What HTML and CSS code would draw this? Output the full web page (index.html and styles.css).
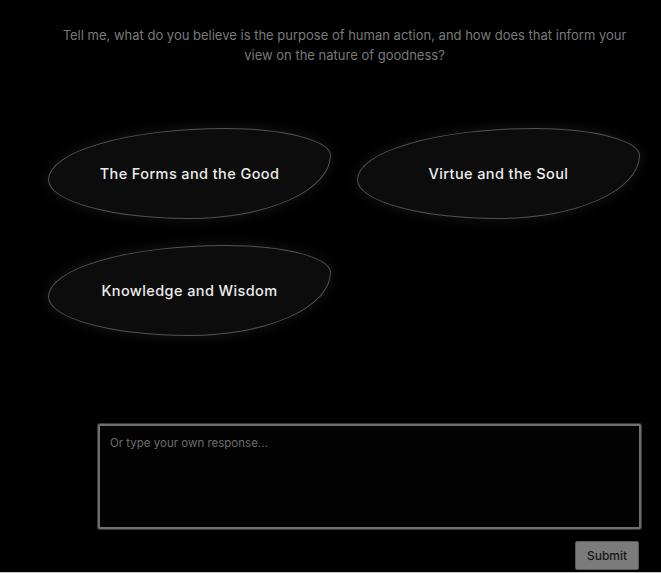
FILE: index.html
```html
<!DOCTYPE html>
<html lang="en">
<head>
    <meta charset="UTF-8">
    <meta name="viewport" content="width=device-width, initial-scale=1.0">
    <title>Dialogue</title>
    <link rel="stylesheet" href="styles.css">
</head>
<body>
    <div class="page">
        <p class="question">Tell me, what do you believe is the purpose of human action, and how does that inform your view on the nature of goodness?</p>

        <div class="choices">
            <button class="choice">The Forms and the Good</button>
            <button class="choice">Virtue and the Soul</button>
            <button class="choice">Knowledge and Wisdom</button>
        </div>

        <div class="answer">
            <textarea class="answer-input" placeholder="Or type your own response..."></textarea>
            <div class="answer-actions">
                <button class="submit">Submit</button>
            </div>
        </div>
    </div>
</body>
</html>
```

FILE: styles.css
```css
:root {
    --bg: #000000;
    --blob-bg: #0c0c0c;
    --blob-border: #525252;
    --text-muted: #7a7a7a;
    --text-light: #ececec;
    --font: "Inter", "Noto Sans", Arial, sans-serif;
}

* {
    box-sizing: border-box;
    margin: 0;
    padding: 0;
}

html {
    background-color: #c8c8c8;
}

body {
    font-family: var(--font);
    background-color: var(--bg);
    height: 572px;
    overflow: hidden;
}

.page {
    width: 593px;
    margin-left: 48px;
    padding-top: 25px;
}

.question {
    text-align: center;
    color: var(--text-muted);
    font-size: 13px;
    line-height: 20px;
}

.choices {
    display: grid;
    grid-template-columns: 283px 283px;
    grid-auto-rows: 91px;
    column-gap: 26px;
    row-gap: 26px;
    margin-top: 63px;
}

.choice {
    font-family: var(--font);
    font-size: 14.5px;
    font-weight: 500;
    letter-spacing: 0.4px;
    color: var(--text-light);
    background-color: var(--blob-bg);
    border: 1.5px solid var(--blob-border);
    border-radius: 63% 37% 50% 50% / 57% 30% 70% 43%;
    box-shadow: 0 0 14px rgba(255, 255, 255, 0.09);
    cursor: pointer;
}

.answer {
    margin-top: 88px;
    margin-left: 50px;
}

.answer-input {
    display: block;
    width: 543px;
    height: 105px;
    background-color: #030303;
    border: 2px solid #6e6e6e;
    box-shadow: 0 0 0 1px #3a3a3a;
    border-radius: 2px;
    padding: 10px 10px;
    font-family: var(--font);
    font-size: 11.5px;
    color: var(--text-light);
    resize: none;
    outline: none;
}

.answer-input::placeholder {
    color: #6c6c6c;
}

.answer-actions {
    display: flex;
    justify-content: flex-end;
    margin-top: 12px;
    padding-right: 2px;
}

.submit {
    width: 64px;
    height: 29px;
    background-color: #7b7b7b;
    border: 1px solid #5a5a5a;
    border-radius: 2px;
    font-family: var(--font);
    font-size: 12px;
    font-weight: 500;
    color: #161616;
    cursor: pointer;
}
```
